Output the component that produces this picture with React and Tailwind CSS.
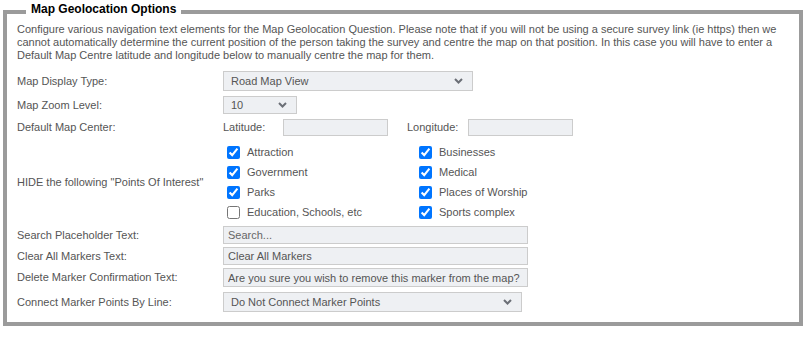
import { useState } from "react"

function Chevron() {
    return (
        <svg width="9" height="6" viewBox="0 0 9 6" className="pointer-events-none absolute right-[10px] top-1/2 -translate-y-1/2">
            <path d="M1 1 L4.5 4.5 L8 1" fill="none" stroke="#6b6f76" strokeWidth="2" />
        </svg>
    )
}

function Select({ value, options, w, h }) {
    const [val, setVal] = useState(value)
    return (
        <div className={`relative ${w} ${h}`}>
            <select value={val} onChange={(e) => setVal(e.target.value)}
                className="appearance-none w-full h-full bg-[#eef0f3] border border-[#cccccc] pl-[7px] text-[11px] text-[#555] outline-none">
                {options.map((o) => <option key={o}>{o}</option>)}
            </select>
            <Chevron />
        </div>
    )
}

function TextBox({ value, placeholder, w, h }) {
    return (
        <input defaultValue={value} placeholder={placeholder}
            className={`${w} ${h} bg-[#eef0f3] border border-[#cccccc] px-[4px] text-[11px] text-[#555] placeholder:text-[#666] outline-none`} />
    )
}

function Row({ label, mt, h, children }) {
    return (
        <div className={`flex items-center ${mt} ${h}`}>
            <div className="w-[206px] shrink-0">{label}</div>
            {children}
        </div>
    )
}

const poi = [
    ["Attraction", true, "Businesses", true, "h-[19px]"],
    ["Government", true, "Medical", true, "h-[20px]"],
    ["Parks", true, "Places of Worship", true, "h-[20px]"],
    ["Education, Schools, etc", false, "Sports complex", true, "h-[20px]"],
]

function Check({ label, checked }) {
    return (
        <label className="flex items-center w-[192px]">
            <input type="checkbox" defaultChecked={checked} className="ml-[4px] w-[13px] h-[13px]" />
            <span className="ml-[7px] text-[11px]">{label}</span>
        </label>
    )
}

export default function App() {
    return (
        <div className="bg-white w-[807px] h-[337px] pt-[10px] pl-[3px] pr-[4px] font-['Liberation_Sans',Arial,sans-serif] text-[11px] text-[#555]">
            <div className="relative border-4 border-[#9b9b9b] h-[316px] pl-[10px] pr-[10px]">
                <span className="absolute left-[19px] top-[-13px] bg-white px-[5px] text-[12px] leading-[16px] font-bold text-black">Map Geolocation Options</span>
                <p className="pt-[9px] leading-[13px]">
                    Configure various navigation text elements for the Map Geolocation Question. Please note that if you will not be using a secure survey link (ie https) then we cannot automatically determine the current position of the person taking the survey and centre the map on that position. In this case you will have to enter a Default Map Centre latitude and longitude below to manually centre the map for them.
                </p>

                <Row label="Map Display Type:" mt="mt-[9px]" h="h-[20px]">
                    <Select value="Road Map View" options={["Road Map View", "Satellite View", "Hybrid View", "Terrain View"]} w="w-[250px]" h="h-[20px]" />
                </Row>
                <Row label="Map Zoom Level:" mt="mt-[5px]" h="h-[18px]">
                    <Select value="10" options={["1", "2", "3", "4", "5", "6", "7", "8", "9", "10", "11", "12"]} w="w-[74px]" h="h-[18px]" />
                </Row>
                <Row label="Default Map Center:" mt="mt-[5px]" h="h-[17px]">
                    <span className="w-[60px]">Latitude:</span>
                    <TextBox value="" w="w-[105px]" h="h-[17px]" />
                    <span className="ml-[19px] w-[61px]">Longitude:</span>
                    <TextBox value="" w="w-[105px]" h="h-[17px]" />
                </Row>

                <div className="flex items-center mt-[7px]">
                    <div className="w-[206px] shrink-0">HIDE the following "Points Of Interest"</div>
                    <div className="flex flex-col">
                        {poi.map(([a, ac, b, bc, rh]) => (
                            <div key={a} className={`flex items-center ${rh}`}>
                                <Check label={a} checked={ac} />
                                <Check label={b} checked={bc} />
                            </div>
                        ))}
                    </div>
                </div>

                <Row label="Search Placeholder Text:" mt="mt-[4px]" h="h-[18px]">
                    <TextBox placeholder="Search..." w="w-[305px]" h="h-[18px]" />
                </Row>
                <Row label="Clear All Markers Text:" mt="mt-[3px]" h="h-[18px]">
                    <TextBox value="Clear All Markers" w="w-[305px]" h="h-[18px]" />
                </Row>
                <Row label="Delete Marker Confirmation Text:" mt="mt-[3px]" h="h-[19px]">
                    <TextBox value="Are you sure you wish to remove this marker from the map?" w="w-[305px]" h="h-[19px]" />
                </Row>
                <Row label="Connect Marker Points By Line:" mt="mt-[5px]" h="h-[20px]">
                    <Select value="Do Not Connect Marker Points" options={["Do Not Connect Marker Points", "Connect Marker Points"]} w="w-[299px]" h="h-[20px]" />
                </Row>
            </div>
        </div>
    )
}
